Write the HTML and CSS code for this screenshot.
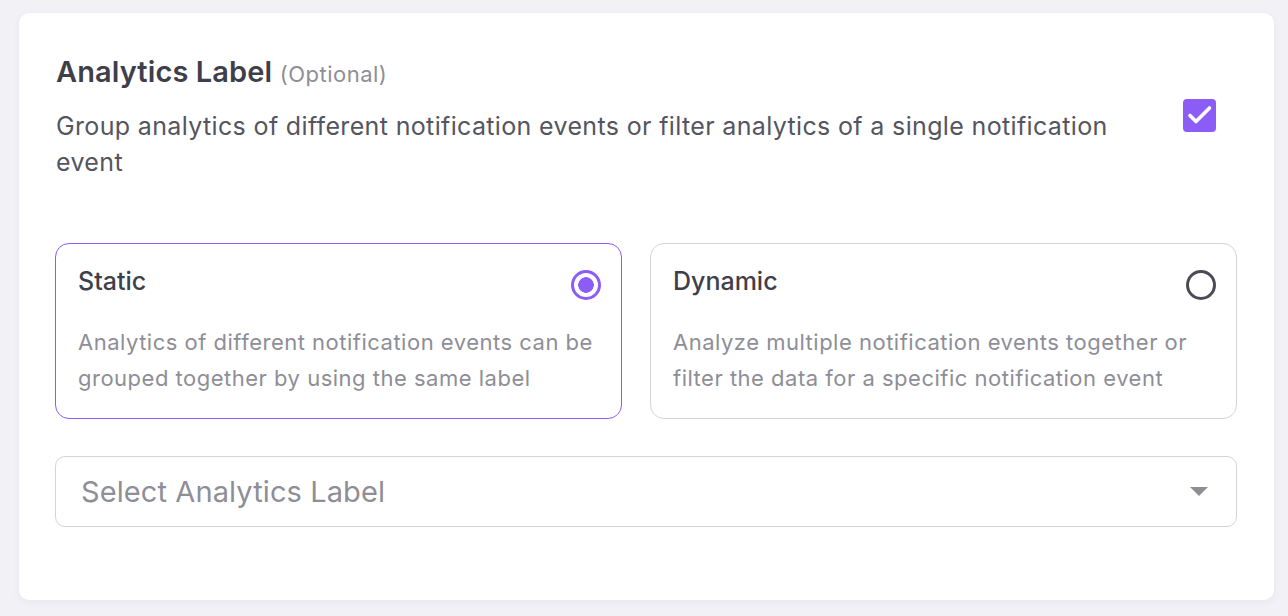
FILE: index.html
```html
<!DOCTYPE html>
<html lang="en">
<head>
<meta charset="utf-8">
<title>Analytics Label</title>
<link rel="stylesheet" href="styles.css">
</head>
<body>
<div class="panel">
  <div class="header">
    <div class="header-text">
      <h2 class="title">Analytics Label <span class="optional">(Optional)</span></h2>
      <p class="desc">Group analytics of different notification events or filter analytics of a single notification event</p>
    </div>
    <span class="checkbox">
      <svg viewBox="0 0 33 33" width="33" height="33"><path d="M7 16.5L13 22.5L26.5 9" fill="none" stroke="#fff" stroke-width="3.6" stroke-linecap="round" stroke-linejoin="round"/></svg>
    </span>
  </div>
  <div class="options">
    <div class="option selected">
      <div class="option-head">
        <span class="option-title">Static</span>
        <span class="radio on"></span>
      </div>
      <p class="option-desc">Analytics of different notification events can be grouped together by using the same label</p>
    </div>
    <div class="option">
      <div class="option-head">
        <span class="option-title">Dynamic</span>
        <span class="radio"></span>
      </div>
      <p class="option-desc">Analyze multiple notification events together or filter the data for a specific notification event</p>
    </div>
  </div>
  <div class="select">
    <span class="placeholder">Select Analytics Label</span>
    <span class="caret"></span>
  </div>
</div>
</body>
</html>
```
FILE: styles.css
```css
* { box-sizing: border-box; }
html, body { margin: 0; padding: 0; }
body {
  background: #f1f1f6;
  font-family: Inter, "Noto Sans", sans-serif;
  width: 1288px;
  height: 616px;
  overflow: hidden;
  padding: 13px 14px 0 19px;
}
.panel {
  background: #fff;
  width: 1255px;
  height: 587px;
  border-radius: 10px;
  box-shadow: 0 2px 8px rgba(40, 40, 80, 0.05);
  padding: 41px 37px 0 36px;
}
.header {
  display: flex;
  align-items: flex-start;
  justify-content: space-between;
  padding-right: 21px;
}
.header-text {
  width: 1062px;
  padding-left: 1px;
}
.title {
  margin: 0;
  font-size: 29px;
  line-height: 36px;
  font-weight: 600;
  color: #3f3f4b;
  letter-spacing: 0.1px;
}
.optional {
  font-size: 22px;
  font-weight: 400;
  color: #8e8e97;
  letter-spacing: 0.5px;
}
.desc {
  margin: 16px 0 0 0;
  font-size: 25px;
  line-height: 36px;
  color: #55555f;
  letter-spacing: 0.35px;
}
.checkbox {
  margin-top: 45px;
  width: 33px;
  height: 33px;
  border-radius: 4px;
  background: #8b5cf6;
  display: flex;
  align-items: center;
  justify-content: center;
  flex: none;
}
.options {
  display: grid;
  grid-template-columns: 567px 1fr;
  gap: 28px;
  margin-top: 63px;
}
.option {
  border: 1px solid #d4d4d8;
  border-radius: 14px;
  height: 176px;
  padding: 19px 20px 0 22px;
}
.option.selected { border-color: #8b5cf6; }
.option-head {
  display: flex;
  justify-content: space-between;
  align-items: center;
  height: 36px;
}
.option-title {
  font-size: 25px;
  font-weight: 500;
  color: #3f3f4b;
}
.radio {
  width: 30px;
  height: 30px;
  border-radius: 50%;
  border: 3px solid #4b4b55;
  margin-top: 8px;
}
.radio.on {
  border-color: #8b5cf6;
  background: radial-gradient(circle, #8b5cf6 0 7.5px, #fff 8px);
}
.option-desc {
  margin: 25px 0 0 0;
  font-size: 22px;
  line-height: 36px;
  color: #8e8e97;
  letter-spacing: 0.5px;
}
.select {
  margin-top: 37px;
  height: 71px;
  border: 1px solid #d4d4d8;
  border-radius: 10px;
  display: flex;
  align-items: center;
  justify-content: space-between;
  padding: 0 28px 0 25px;
}
.placeholder {
  font-size: 29px;
  color: #8e8e97;
  letter-spacing: 0.1px;
}
.caret {
  width: 0;
  height: 0;
  border-left: 9px solid transparent;
  border-right: 9px solid transparent;
  border-top: 9px solid #8e8e97;
}
```
